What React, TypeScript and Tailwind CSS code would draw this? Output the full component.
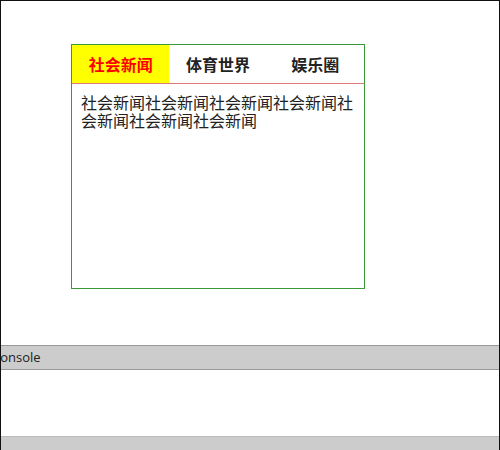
import { useState } from 'react'

// Tab names and their panel text
const tabs = [
  { title: '社会新闻', body: '社会新闻社会新闻社会新闻社会新闻社会新闻社会新闻社会新闻' },
  { title: '体育世界', body: '体育世界体育世界体育世界体育世界' },
  { title: '娱乐圈', body: '娱乐圈娱乐圈娱乐圈娱乐圈' },
]

export default function App() {
  const [active, setActive] = useState(0)

  return (
    <div className="relative h-[450px] w-[500px] overflow-hidden border-x border-t border-[#111] bg-white font-['Noto_Sans_CJK_SC',sans-serif]">
      {/* Page area */}
      <div className="h-[344px] pl-[70px] pt-[43px]">
        <div className="flex h-[245px] w-[294px] flex-col border border-[#3a9a3a]">
          {/* Tab bar */}
          <div className="flex h-[39px] border-b border-[#e07a7a]">
            {tabs.map((tab, i) => (
              <button
                key={tab.title}
                onClick={() => setActive(i)}
                className={`flex flex-1 items-center justify-center text-[16px] font-bold ${
                  i === active ? 'bg-[#ffff00] text-[#ff0000]' : 'text-[#222]'
                }`}
              >
                {tab.title}
              </button>
            ))}
          </div>

          {/* Panel */}
          <div className="px-[9px] pt-[9px] text-[16px] leading-[18px] text-[#222]">
            {tabs[active].body}
          </div>
        </div>
      </div>

      {/* Devtools drawer */}
      <div className="flex h-[25px] items-center border-y border-[#9a9a9a] bg-[#cccccc] font-['Open_Sans',sans-serif] text-[13px] text-[#222]">
        <span className="-ml-[9px]">Console</span>
      </div>
      <div className="h-[66px] bg-white" />
      <div className="h-[14px] border-t border-[#bbb] bg-[#cccccc]" />
    </div>
  )
}
